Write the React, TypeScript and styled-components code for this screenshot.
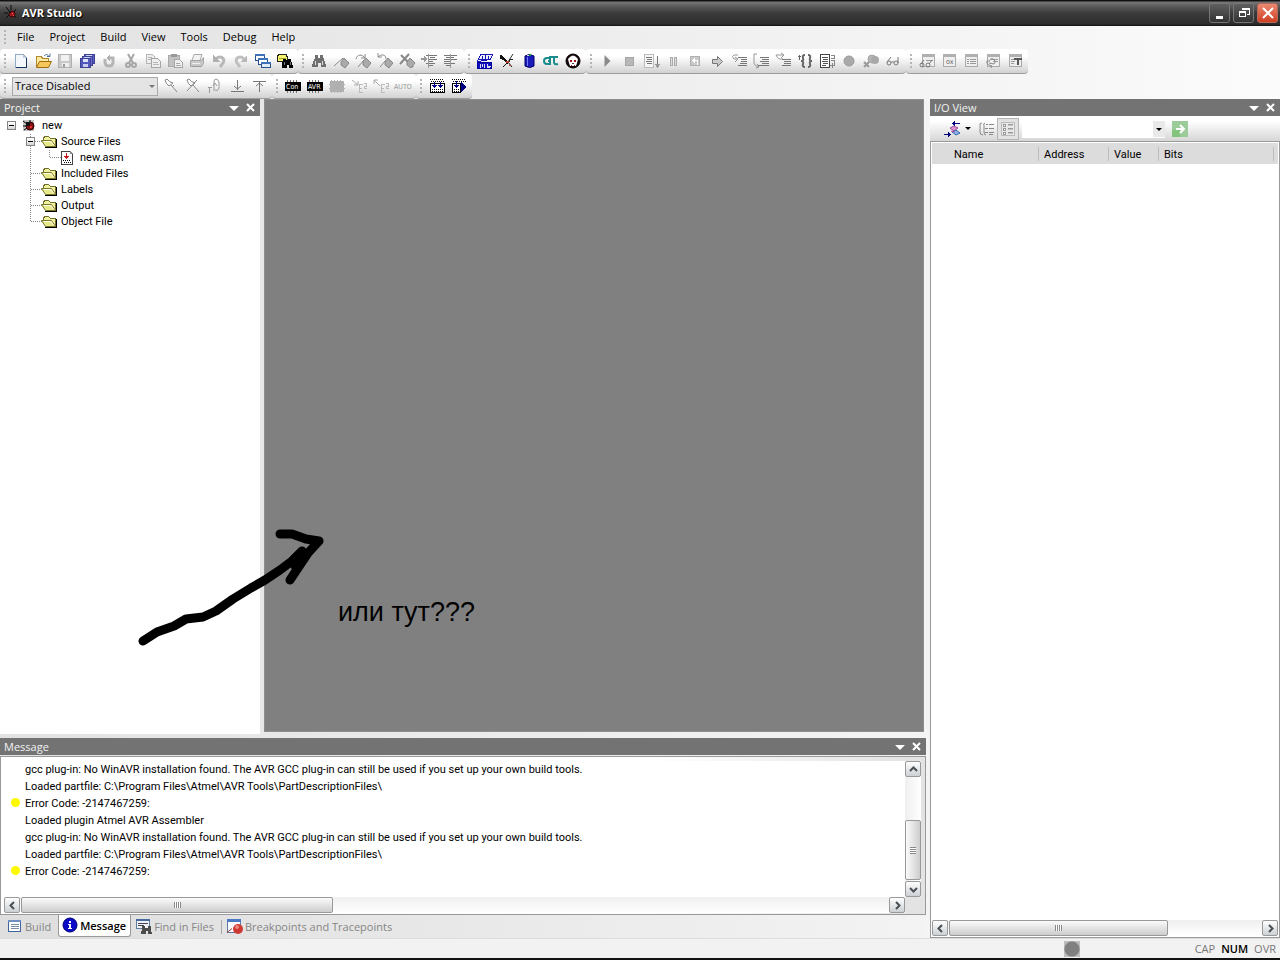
import React from 'react';
import type { ReactNode } from 'react';
import styled, { createGlobalStyle, css } from 'styled-components';

const uiFont = '"Open Sans", "Noto Sans", sans-serif';
const listFont = 'Roboto, "Liberation Sans", sans-serif';

const GlobalStyle = createGlobalStyle`
  *, *::before, *::after { box-sizing: border-box; }
  body { margin: 0; font: 11px/16px ${uiFont}; color: #000; }
  button, select { font: inherit; color: inherit; margin: 0; padding: 0; border: 0; background: none; }
  ul { list-style: none; margin: 0; padding: 0; }
  svg { display: block; flex: none; }
  h1, h2, p { margin: 0; font-size: inherit; }
`;

/* ---------- icons ---------- */

const Svg = styled.svg.attrs({ width: 16, height: 16, viewBox: '0 0 16 16', shapeRendering: 'crispEdges', 'aria-hidden': true })`
  overflow: visible;
`;
const Glyph = styled.text`
  font-family: "DejaVu Sans Condensed", "Liberation Sans", sans-serif;
  font-size: 7px;
`;

const G = '#999';
const L = '#c4c4c4';

const line = (d: string, stroke = G, strokeWidth = 1) => <path d={d} fill="none" stroke={stroke} strokeWidth={strokeWidth} />;
const smooth = (d: string, stroke = G, strokeWidth = 1) => (
  <path d={d} fill="none" stroke={stroke} strokeWidth={strokeWidth} shapeRendering="auto" />
);
const fill = (d: string, color = G) => <path d={d} fill={color} />;
const flag = <path d="M8 9l3-4 5 5-4 5-4-3z" fill="#aaa" stroke="#888" shapeRendering="auto" />;
const textLines = line('M7 4.500h9M9 6.500h7M7 8.500h9M9 10.500h7M5 12.500h11', '#777');
const win = (
  <>
    <path d="M2.500 1.500h12v12h-12z" fill="#eee" stroke="#aaa" />
    {fill('M2 1h13v3H2z', '#b0b0b0')}
  </>
);
const binoculars = (c: string) => (
  <>
    {fill('M4 2h3v3h2V2h3v3l1 1v2h1l1 6h-5v-4H7v4H1l1-6h1V6l1-1z', c)}
    {line('M4.500 8v4M11.500 8v4', '#ddd')}
  </>
);

const icons: Record<string, ReactNode> = {
  newFile: (
    <>
      <path d="M2.500 1.500h8l3 3v10h-11z" fill="#f4f8fd" stroke="#8fa9c6" />
      {fill('M10 2l3 3h-3z', '#b7cbe2')}
      {line('M13.500 5v10M3 14.500h11', '#17365f')}
    </>
  ),
  open: (
    <>
      <path d="M1.500 14V3.500h5l1 2h6v3" fill="#ffe9a0" stroke="#b08a2a" />
      <path d="M1.500 14.500l3-6h12l-3 6z" fill="#f7c859" stroke="#9b6d10" shapeRendering="auto" />
      {smooth('M9 3c2-2 4-2 5 1M12 3.500h3v-3', '#4a6c95')}
    </>
  ),
  save: (
    <>
      <path d="M1.500 1.500h13v13h-13z" fill="#c9c9c9" stroke="#b0b0b0" />
      {fill('M4 2h8v6H4z', '#f1f1f1')}
      {fill('M5 10h7v4H5z', '#eee')}
      {fill('M6 11h2v3H6z', '#999')}
    </>
  ),
  saveAll: (
    <>
      <path d="M5.500 1.500h10v9h-10z" fill="#5c60c4" stroke="#3d4192" />
      <path d="M3.500 3.500h10v9h-10z" fill="#6b70d2" stroke="#3d4192" />
      <path d="M1.500 5.500h10v9h-10z" fill="#5257bd" stroke="#3d4192" />
      {fill('M4 6h5v3H4z', '#dfe3fa')}
      {fill('M4 11h5v3H4z', '#c9cdf0')}
      {fill('M5 4h6v1H5zM7 2h6v1H7z', '#cfd3f5')}
    </>
  ),
  reload: <>{smooth('M4 6v3q0 4 4 4t4-4V5H9', '#b5b5b5', 3)}{fill('M9 2v7L5 5z', '#b0b0b0')}</>,
  cut: (
    <>
      {smooth('M5 1l5 9M11 1L6 10', '#a6a6a6', 2)}
      {smooth('M3 12a2 2 0 1 1 4 0a2 2 0 1 1-4 0M9 12a2 2 0 1 1 4 0a2 2 0 1 1-4 0', '#a6a6a6', 2)}
    </>
  ),
  copy: (
    <>
      <path d="M1.500 1.500h6l2 2v7h-8z" fill="#eee" stroke="#b5b5b5" />
      <path d="M6.500 5.500h6l3 3v6h-9z" fill="#eee" stroke="#a5a5a5" />
      {line('M3 4.500h4M3 6.500h3M8 9.500h5M8 11.500h6', '#b5b5b5')}
    </>
  ),
  paste: (
    <>
      <path d="M1.500 2.500h11v11h-11z" fill="#c2c2c2" stroke="#a8a8a8" />
      {fill('M4 1h6v3H4z', '#999')}
      <path d="M7.500 6.500h5l3 3v5h-8z" fill="#f0f0f0" stroke="#a5a5a5" />
      {line('M9 10.500h4M9 12.500h5', '#aaa')}
    </>
  ),
  print: (
    <>
      <path d="M5 1.500h8l-2 6H3z" fill="#f2f2f2" stroke="#aaa" shapeRendering="auto" />
      <path d="M1.500 7.500h11l2-3v6l-2 3h-11z" fill="#c8c8c8" stroke="#a5a5a5" shapeRendering="auto" />
      {line('M3 10.500h8', '#eee')}
      {fill('M3 13h9v1H3z', '#999')}
    </>
  ),
  undo: <>{smooth('M5 6c4-4 10-1 7 4l-3 4', '#b8b8b8', 3)}{fill('M2 2v7h7z', '#b0b0b0')}</>,
  redo: <>{smooth('M11 6c-4-4-10-1-7 4l3 4', '#c0c0c0', 3)}{fill('M14 2v7H7z', '#b8b8b8')}</>,
  cascade: (
    <>
      <path d="M.5 1.500h9v6h-9z" fill="#fff" stroke="#24508f" />
      {fill('M0 1h10v2H0z', '#3e72b8')}
      <path d="M3.500 5.500h9v6h-9z" fill="#fff" stroke="#24508f" />
      {fill('M3 5h10v2H3z', '#3e72b8')}
      <path d="M6.500 9.500h9v5h-9z" fill="#e3ecf8" stroke="#24508f" />
      {fill('M6 9h10v2H6z', '#3e72b8')}
    </>
  ),
  findInFiles: (
    <>
      <path d="M.5 2.500l2-1h7v2h1v5h-10z" fill="#f7f36b" stroke="#222" />
      {line('M2 5.500h7', '#a39d2c')}
      {fill('M6 6h3v1h2V6h3v3h1l1 6h-4v-3h-2v3H5V9h1z', '#000')}
      {line('M7.500 9v3M13.500 9v3', '#777')}
    </>
  ),
  find: binoculars('#6f6f6f'),
  bookmark: <>{smooth('M1 13L10 5', '#888')}{flag}</>,
  bookmarkNext: <>{smooth('M1 6c1-5 6-5 9-1M10 1v4H6M3 14l6-7', '#888')}{flag}</>,
  bookmarkPrev: <>{smooth('M9 6C9 1 4 1 1 4M1 0v4h4M3 14l6-7', '#888')}{flag}</>,
  bookmarkClear: <>{smooth('M2 2l12 12M10 1L1 11', '#888', 2)}{flag}</>,
  indent: <>{line('M5 2.500h11M9 4.500h5M7 6.500h9M7 8.500h5M5 10.500h9M7 12.500h5', '#777')}{fill('M0 5h3V3l3 3-3 3V7H0z')}{line('M7.500 1v14')}</>,
  outdent: <>{line('M1 2.500h13M3 4.500h8M1 6.500h13M1 8.500h6M1 10.500h11M3 12.500h5', '#777')}{line('M7.500 1v14')}</>,
  simulator: (
    <>
      <path d="M.5 9.500h14v6h-14z" fill="#1010c0" stroke="#0000a0" />
      <path d="M.5 8.500l3-7h12l-2 5z" fill="#eef" stroke="#1515b5" />
      {line('M5.500 3v4M8.500 2v4M11.500 3v4M1 6.500h13', '#1515b5')}
      {line('M3.500 11v4M5.500 11v3M7.500 11v4M10.500 11v2h3M10 14.500h3', '#dde')}
    </>
  ),
  butterfly: (
    <>
      {fill('M1 2l3 1 4 5 1 3-2-1-3-3-3-1z', '#111')}
      {smooth('M14 1L9 9', '#333')}
      {smooth('M9 9l4 5M8 10l-4 4', '#111')}
      {fill('M10 6h4v1h-3v2h-1z', '#222')}
      {fill('M7 8h3v2H7zM10 12h2v1h-2z', '#c03a2b')}
    </>
  ),
  can: (
    <>
      <path d="M4 3q4-3 9 0v10q-4 3-9 0z" fill="#1a1ab8" stroke="#00006a" shapeRendering="auto" />
      {line('M6.500 4v9', '#7a7af0')}
      {fill('M8 1h2v2H8z', '#1c8a4b')}
      {fill('M6 2h2v1H6z', '#dde')}
    </>
  ),
  ctt: <>{smooth('M6 5H4Q1 5 1 8t3 3h3V4h8M7 8H5M11 4v5q0 3 4 2', '#1a8c8c', 2)}</>,
  bug: (
    <>
      <circle cx="8" cy="8" r="7" fill="#160808" stroke="#000" shapeRendering="auto" />
      <path d="M3 6q5-7 10 0l-1 4-1 3H5l-1-3z" fill="#fff" shapeRendering="auto" />
      {fill('M5 7h2v2H5zM9 7h2v2H9zM6 12h1v1H6zM9 12h1v1H9z', '#a01414')}
      {fill('M7 10h2v1H7z', '#444')}
    </>
  ),
  run: <path d="M5.500 2v12l6-6z" fill="#8a8a8a" shapeRendering="auto" />,
  stop: <path d="M4.500 4.500h8v8h-8z" fill="#b8b8b8" stroke="#a5a5a5" />,
  showNext: <><path d="M1.500 1.500h9v13h-9z" fill="#f6f6f6" stroke="#bbb" />{line('M3 4.500h6M4 6.500h5M3 8.500h6M4 10.500h5M14.500 3v11', '#777')}{fill('M12 11h5l-2 4h-1z')}</>,
  pause: <path d="M5.500 4.500h2v8h-2zM9.500 4.500h2v8h-2z" fill="#ddd" stroke="#aaa" />,
  reset: <><path d="M3.500 3.500h9v9h-9z" fill="#c9c9c9" stroke="#b0b0b0" />{line('M6 7.500h5M10.500 7v5', '#fff')}{fill('M8 5v5L5 7.500z', '#fff')}</>,
  stepArrow: <path d="M3.500 6.500h5v-3l5 5-5 5v-3h-5z" fill="#ccc" stroke="#777" shapeRendering="auto" />,
  stepInto: <>{smooth('M7 2H3Q0 3 3 6h3M4 4l3 2-3 3', '#999')}{line('M7 4.500h9M10 6.500h6M10 8.500h6M7 12.500h9M9 10.500h7', '#777')}</>,
  stepOver: <>{smooth('M4 1H1v9q0 3 5 4M4 11l2 3-3 1', '#999')}{textLines}</>,
  stepOut: <>{smooth('M8 6Q3 7 1 2h7M6 0l3 2-3 3', '#999')}{line('M7 6.500h9M9 8.500h7M9 10.500h7M7 12.500h9', '#777')}</>,
  runCursor: <>{smooth('M8 2Q5 2 6 5t-2 3q3 0 2 3t2 3M11 2q3 0 2 3t2 3q-3 0-2 3t-2 3', '#666', 2)}{line('M1 3.500h3M2.500 2v5', '#666')}</>,
  autoStep: <><path d="M1.500 1.500h9v13h-9z" fill="#fff" stroke="#444" />{line('M3 4.500h6M4 6.500h5M3 8.500h6M4 10.500h5M3 12.500h4', '#555')}{line('M12 2.500h3v3h-3M12 7.500h3v5h-4M13.500 10v5', '#888')}</>,
  breakpoint: <circle cx="8" cy="8" r="5" fill="#a9a9a9" stroke="#999" shapeRendering="auto" />,
  clearBreakpoints: <><circle cx="9" cy="6" r="4" fill="#b5b5b5" stroke="#a5a5a5" shapeRendering="auto" /><circle cx="12" cy="7" r="4" fill="#a8a8a8" shapeRendering="auto" />{smooth('M1 9l5 5M6 9l-5 5', '#999', 2)}</>,
  glasses: <>{smooth('M2 10a2 2 0 1 0 4 0a2 2 0 1 0-4 0M9 10a2 2 0 1 0 4 0a2 2 0 1 0-4 0M2 9l4-5M13 10V4M6 9h3', '#777')}</>,
  watch: <><g transform="translate(1 0)">{win}{line('M6 7.500h7', '#999')}</g>{smooth('M1 12a2 2 0 1 0 4 0a2 2 0 1 0-4 0M7 12a2 2 0 1 0 4 0a2 2 0 1 0-4 0M2 11l3-4M10 11l3-4', '#777')}</>,
  registers: <>{win}<Glyph x="5" y="11" fill="#666">ox</Glyph></>,
  memory: <>{win}{line('M4 6.500h2M7 6.500h6M4 8.500h2M7 8.500h6M4 10.500h2M7 10.500h6', '#999')}</>,
  ioWindow: <>{win}{line('M6 6.500h7M8 8.500h5', '#999')}{smooth('M4 9a3 3 0 1 1 5 2l-5-1M3 7q-4 4 4 6l-1 2', '#888')}</>,
  disassembler: <>{win}{line('M4 6.500h3M4 8.500h4M4 10.500h3', '#999')}{line('M7 6h8M11 6v6', '#555', 2)}</>,
  pin: <>{smooth('M2 2q1 4 4 6l4-3Q6 4 4 1zM8 7l6 7M9 9l2-2', '#888')}</>,
  pinOff: <>{smooth('M2 2q1 4 4 6l4-3Q6 4 4 1zM8 7l6 7M12 2L2 13', '#888')}</>,
  traceLoop: <>{smooth('M7 13V4q0-3 2-3t3 3v6q-1 4-4 2M6 8l2-3 2 3', '#999')}{line('M1 9.500h4M2.500 9v6', '#999')}</>,
  downTo: <>{line('M2 13.500h13M8.500 2v10', '#777')}{smooth('M5 8l3.500 3L12 8', '#777')}</>,
  upTo: <>{line('M2 3.500h13M8.500 4v10', '#777')}{smooth('M5 8l3.500-3L12 8', '#777')}</>,
  chipCon: <>{fill('M0 4h16v9H0z', '#000')}{line('M2.500 2v2M5.500 2v2M8.500 2v2M11.500 2v2M2.500 13v2M5.500 13v2M8.500 13v2M11.500 13v2', '#777')}<Glyph x="1" y="11" fill="#fff">Con</Glyph></>,
  chipAvr: <>{fill('M0 4h16v9H0z', '#000')}{line('M2.500 2v2M5.500 2v2M8.500 2v2M11.500 2v2M2.500 13v2M5.500 13v2M8.500 13v2M11.500 13v2', '#777')}<Glyph x="1" y="11" fill="#fff">AVR</Glyph></>,
  chip: <>{fill('M1 3h14v11H1z', '#b0b0b0')}{line('M2.500 2v13M5.500 2v13M8.500 2v13M11.500 2v13M0 6.500h16M0 10.500h16', '#b0b0b0')}</>,
  eepromIn: <>{smooth('M1 2l6 5M7 3v4H3', '#aaa')}{line('M12 6.500h-4v8h4M8 10.500h3M13 5.500h2v3h-2v2h3', '#bbb')}</>,
  eepromOut: <>{smooth('M1 2l6 6M1 6V2h4', '#aaa')}{line('M12 6.500h-4v8h4M8 10.500h3M13 5.500h2v3h-2v2h3', '#bbb')}</>,
  auto: <Glyph x="-1" y="11" fill="#999">AUTO</Glyph>,
  build: (
    <>
      <path d="M1.500 5.500h14v9h-14z" fill="#fff" stroke="#000" />
      <path d="M1 1.500h14M2 3.500h13M3 11.500h11M3 13.500h11" stroke="#000" strokeDasharray="1 1" />
      {line('M5.500 4v4M11.500 4v4', '#000080')}
      {fill('M3 7h5L5.500 10zM9 7h5l-2.500 3z', '#000080')}
    </>
  ),
  buildRun: (
    <>
      <path d="M1.500 5.500h8v9h-8z" fill="#fff" stroke="#000" />
      <path d="M1 1.500h14M2 3.500h13M3 11.500h6M3 13.500h6" stroke="#000" strokeDasharray="1 1" />
      {line('M5.500 3v5', '#000080')}
      {fill('M3 7h5l-2.500 3zM10 4l6 5-6 5z', '#000080')}
    </>
  ),
  ladybug: (
    <>
      {smooth('M3 2l3 4M8 0v5M1 8h4M13 4l-2 3M3 13l3-3M13 13l-2-3', '#0a0a0a')}
      <circle cx="9" cy="9" r="3" fill="#a3161b" stroke="#3a0505" shapeRendering="auto" />
      {fill('M6 6h2v2H6z', '#111')}
      {fill('M9 8h1v1H9zM10 10h1v1h-1z', '#e55')}
    </>
  ),
  project: (
    <>
      {fill('M1 2h11v11H1z', '#c3c3c3')}
      {smooth('M1 3l4 3M8 2v3M1 8h3M2 12l3-2', '#000')}
      <circle cx="8" cy="8" r="4" fill="#8d0f14" stroke="#200" shapeRendering="auto" />
      {fill('M4 4h4v4H4z', '#111')}
      {fill('M8 8h2v2H8z', '#d33')}
    </>
  ),
  folder: (
    <>
      {fill('M4 14h12V5h-1v8H4z', '#000')}
      <path d="M2.500 7V4.500l1-2h4l2 2h5v8h-1" fill="#f3f0a0" stroke="#6f6f2a" />
      <path d="M.5 6.500h10l4 6h-10z" fill="#e9e88a" stroke="#77772c" shapeRendering="auto" />
      {smooth('M3 7.500h7l3 4', '#fffff0')}
    </>
  ),
  asmFile: (
    <>
      <path d="M1.500 1.500h9l2 2v11h-11z" fill="#fff" stroke="#444" />
      {fill('M10 1v3h3z', '#888')}
      {line('M6.500 3v4', '#c01818')}
      {fill('M4 6h5L6.500 9z', '#c01818')}
      <path d="M3 10.500h8M4 12.500h7" stroke="#000" strokeDasharray="1 1" />
    </>
  ),
  buildTab: <><path d="M1.500 1.500h12v11h-12z" fill="#fff" stroke="#3e65a0" />{fill('M1 1h13v2H1z', '#6f8fc0')}{line('M4 5.500h8M4 7.500h8M4 9.500h8', '#7d8ca5')}</>,
  infoTab: (
    <>
      <circle cx="8" cy="7" r="7" fill="#0a0ac8" stroke="#000070" shapeRendering="auto" />
      {fill('M7 3h2v2H7zM6 6h3v4h1v1H6v-1h1V7H6z', '#fff')}
    </>
  ),
  findTab: (
    <>
      <path d="M.5 .5h13v9h-13z" fill="#eef2f8" stroke="#5f7ba6" />
      {fill('M0 0h14v2H0z', '#47699d')}
      {line('M2 4.500h10M2 6.500h6', '#445')}
      {fill('M6 7h3v2h3V7h3v3l1 5h-4v-3h-2v3H5l1-5z', '#4c4c4c')}
    </>
  ),
  breakTab: (
    <>
      <path d="M.5 .5h13v13h-13z" fill="#f7f9fc" stroke="#5f7ba6" />
      {fill('M0 0h14v3H0z', '#4a78c2')}
      {smooth('M0 13.500l5-4', '#a33')}
      <circle cx="11" cy="10" r="5" fill="#cd3a33" shapeRendering="auto" />
      <circle cx="10" cy="8" r="2" fill="#e9877c" shapeRendering="auto" />
    </>
  ),
  ioGroup: (
    <>
      {line('M0 13.500h6M9 2.500h7', '#000080')}
      {fill('M4 11v5l3-3zM11 0v5L8 2.500z', '#000080')}
      <path d="M6 7l4-2 4 2-4 3z" fill="#e58fd0" stroke="#93529a" shapeRendering="auto" />
      <path d="M8 11l4-2 4 3-4 2z" fill="#86b4e8" stroke="#3f66aa" shapeRendering="auto" />
      {smooth('M7 10l4 1', '#b04ba5')}
    </>
  ),
  ioTree: <>{smooth('M4 2q-3 0-2 3v6q0 3 3 3M7 2Q5 2 6 5v6q0 3 2 3', '#888')}{line('M8 3.500h2M11 3.500h5M7 7.500h3M11 7.500h5M7 11.500h3M11 11.500h5M11 13.500h4', '#888')}</>,
  ioList: <><path d="M1.500 1.500h13v13h-13z" fill="#e8e8e8" stroke="#bbb" /><path d="M3.500 3.500h2v2h-2zM3.500 7.500h2v2h-2zM3.500 11.500h2v2h-2z" fill="#fff" stroke="#999" />{line('M8 4.500h5M8 8.500h5M8 12.500h5', L)}{line('M8 3.500h5M8 7.500h5M8 11.500h5', '#999')}</>,
  go: <>{fill('M0 0h16v16H0z', '#9bcb98')}{fill('M0 9h8v7H0z', '#82c47c')}{line('M4 8h7', '#fff', 2)}{smooth('M8 4l4 4-4 4', '#fff', 2)}</>,
};

const Icon = ({ name }: { name: string }) => <Svg>{icons[name]}</Svg>;

/* ---------- window frame ---------- */

const Window = styled.div`
  position: relative;
  display: flex;
  flex-direction: column;
  min-height: 100vh;
  background: linear-gradient(90deg, #e2e2e2, #fbfbfb);
  border-bottom: 2px solid #111;
`;

const TitleBar = styled.header`
  display: flex;
  align-items: center;
  gap: 3px;
  height: 26px;
  padding: 0 2px 0 3px;
  color: #fff;
  background: linear-gradient(#111 0, #111 1px, #777 2px, #5c5c5c 6px, #3c3c3c 13px, #2c2c2c 24px, #111 26px);
`;
const Title = styled.h1`
  flex: 1;
  font-weight: 700;
  text-shadow: 1px 1px 1px #000;
`;
const CaptionButton = styled.button<{ $danger?: boolean }>`
  display: grid;
  place-items: center;
  width: 21px;
  height: 20px;
  border: 1px solid #777;
  border-radius: 3px;
  background: linear-gradient(#5f5f5f, #333);
  ${(p) => p.$danger && css`border-color: #b5685a; background: linear-gradient(#ea8a72, #cf3f22);`}
`;

const Grip = styled.span`
  flex: none;
  width: 2px;
  height: 14px;
  margin: 0 4px;
  background: repeating-linear-gradient(#b5b5b5 0 2px, transparent 2px 4px);
`;

const MenuBar = styled.nav`
  display: flex;
  align-items: center;
  height: 23px;
  padding-bottom: 2px;
`;
const MenuButton = styled.button`
  height: 20px;
  padding: 0 8px 0 7px;
`;

const ToolRow = styled.div`
  display: flex;
  height: 25px;
`;
const Tools = styled.div`
  display: flex;
  align-items: center;
  height: 25px;
  padding-right: 2px;
  border-bottom: 1px solid #9c9c9c;
  border-radius: 4px;
  background: linear-gradient(#fff 30%, #d2d2d2);
`;
const ToolButton = styled.button<{ $pressed?: boolean }>`
  display: grid;
  place-items: center;
  flex: none;
  width: 22px;
  height: 22px;
  ${(p) => p.$pressed && css`border: 1px solid #b5b5b5; background: #e2e2e2;`}
`;

const Combo = styled.span`
  position: relative;
  display: flex;
`;
const ComboArrow = styled.span<{ $strong?: boolean }>`
  position: absolute;
  right: 3px;
  top: 8px;
  border: 3px solid transparent;
  border-top-color: ${(p) => (p.$strong ? '#000' : '#777')};
  border-bottom: 0;
  pointer-events: none;
`;
const TraceCombo = styled(Combo)`
  width: 146px;
  margin: 0 2px;
`;
const TraceSelect = styled.select`
  appearance: none;
  width: 100%;
  height: 19px;
  padding-left: 2px;
  border: 1px solid #aaa;
  background: #e4e4e4;
`;

/* ---------- docking layout ---------- */

const Main = styled.main`
  display: grid;
  flex: 1;
  grid-template-columns: minmax(0, 1fr) 350px;
  gap: 4px;
`;
const LeftColumn = styled.div`
  display: grid;
  grid-template-rows: minmax(0, 1fr) 200px;
  gap: 4px;
`;
const Upper = styled.div`
  display: grid;
  grid-template-columns: 260px minmax(0, 1fr);
  gap: 4px;
  padding-right: 2px;
`;
const Workspace = styled.section`
  margin-bottom: 2px;
  border: 1px solid #8e8e8e;
  background: #808080;
`;
const Panel = styled.section`
  display: flex;
  flex-direction: column;
  min-width: 0;
`;
const PanelHeader = styled.header`
  display: flex;
  align-items: center;
  flex: none;
  height: 17px;
  padding: 0 2px 0 4px;
  color: #f2f2f2;
  background: #737373;
`;
const PanelTitle = styled.h2`
  flex: 1;
  font-weight: 400;
`;
const HeaderButton = styled.button`
  display: grid;
  place-items: center;
  width: 16px;
  height: 16px;
`;

const Dock = ({ title, children }: { title: string; children: ReactNode }) => (
  <Panel aria-label={title}>
    <PanelHeader>
      <PanelTitle>{title}</PanelTitle>
      <HeaderButton aria-label={`${title} options`}>
        <svg width="10" height="6" aria-hidden="true"><path d="M0 1h10L5 6z" fill="#fff" /></svg>
      </HeaderButton>
      <HeaderButton aria-label={`Close ${title}`}>
        <svg width="9" height="9" aria-hidden="true"><path d="M1 1l7 7M8 1L1 8" stroke="#fff" strokeWidth="2" /></svg>
      </HeaderButton>
    </PanelHeader>
    {children}
  </Panel>
);

/* ---------- project tree ---------- */

const Tree = styled.ul`
  flex: 1;
  padding-top: 2px;
  background: #fff;
  font-family: ${listFont};
`;
const TreeRow = styled.li`
  position: relative;
  display: flex;
  align-items: center;
  height: 16px;
  gap: 4px;
`;
const Expander = styled.button<{ $level: number }>`
  position: absolute;
  left: ${(p) => 7 + p.$level * 19}px;
  top: 3px;
  width: 9px;
  height: 9px;
  border: 1px solid #848484;
  background: linear-gradient(#000, #000) center / 5px 1px no-repeat, linear-gradient(#fff, #d5d5d5);
`;

const branches = {
  root: '',
  node: 'M30.500 0v16M31 7.500h12',
  leaf: 'M30.500 0v16M49.500 0v8M50 7.500h12',
  last: 'M30.500 0v8M31 7.500h12',
};
const tree: { label: string; icon: string; level: number; branch: keyof typeof branches; open?: boolean }[] = [
  { label: 'new', icon: 'project', level: 0, branch: 'root', open: true },
  { label: 'Source Files', icon: 'folder', level: 1, branch: 'node', open: true },
  { label: 'new.asm', icon: 'asmFile', level: 2, branch: 'leaf' },
  { label: 'Included Files', icon: 'folder', level: 1, branch: 'node' },
  { label: 'Labels', icon: 'folder', level: 1, branch: 'node' },
  { label: 'Output', icon: 'folder', level: 1, branch: 'node' },
  { label: 'Object File', icon: 'folder', level: 1, branch: 'last' },
];
const Twig = styled.svg`
  overflow: visible;
`;

/* ---------- scroll bars ---------- */

const ScrollBar = styled.div<{ $vertical?: boolean }>`
  display: flex;
  flex: none;
  flex-direction: ${(p) => (p.$vertical ? 'column' : 'row')};
  ${(p) => (p.$vertical ? 'width: 16px;' : 'height: 16px;')}
  background: linear-gradient(${(p) => (p.$vertical ? '90deg' : '180deg')}, #efefef, #fff);
`;
const ScrollButton = styled.button`
  display: grid;
  place-items: center;
  flex: none;
  width: 16px;
  height: 16px;
  border: 1px solid #999;
  border-radius: 2px;
  background: linear-gradient(#fff, #ccd0d4);
`;
const Track = styled.div<{ $vertical?: boolean }>`
  display: flex;
  flex: 1;
  flex-direction: ${(p) => (p.$vertical ? 'column' : 'row')};
  justify-content: ${(p) => (p.$vertical ? 'flex-end' : 'flex-start')};
  padding: ${(p) => (p.$vertical ? '0 0 1px' : '0 0 0 1px')};
`;
const Thumb = styled.div<{ $vertical?: boolean; $size: string }>`
  display: grid;
  place-items: center;
  ${(p) => (p.$vertical ? 'height' : 'width')}: ${(p) => p.$size};
  border: 1px solid #999;
  border-radius: 2px;
  background: linear-gradient(${(p) => (p.$vertical ? '90deg' : '180deg')}, #fbfbfb, #cdcdcd);
`;
const ThumbGrip = styled.span<{ $vertical?: boolean }>`
  width: ${(p) => (p.$vertical ? 6 : 7)}px;
  height: ${(p) => (p.$vertical ? 7 : 6)}px;
  background: repeating-linear-gradient(${(p) => (p.$vertical ? '180deg' : '90deg')}, #888 0 1px, #fff 1px 2px);
`;

const arrows = { left: 'M6 1L2.500 4.500 6 8', right: 'M3 1l3.500 3.500L3 8', up: 'M1 6l3.500-3.500L8 6', down: 'M1 3l3.500 3.500L8 3' };
const Arrow = ({ to }: { to: keyof typeof arrows }) => (
  <ScrollButton aria-label={`Scroll ${to}`}>
    <svg width="9" height="9" aria-hidden="true"><path d={arrows[to]} fill="none" stroke="#4b4f55" strokeWidth="2" /></svg>
  </ScrollButton>
);
const Scroll = ({ vertical, size }: { vertical?: boolean; size: string }) => (
  <ScrollBar $vertical={vertical}>
    <Arrow to={vertical ? 'up' : 'left'} />
    <Track $vertical={vertical}>
      <Thumb $vertical={vertical} $size={size}><ThumbGrip $vertical={vertical} /></Thumb>
    </Track>
    <Arrow to={vertical ? 'down' : 'right'} />
  </ScrollBar>
);

/* ---------- messages ---------- */

const MessageBox = styled.div`
  display: grid;
  flex: 1;
  grid-template-columns: minmax(0, 1fr) 16px;
  grid-template-rows: minmax(0, 1fr) 16px;
  margin-top: 1px;
  padding: 4px 4px 1px 3px;
  border: 1px solid #999;
  background: linear-gradient(90deg, #fff 70%, #e3e3e3 98%);
`;
const MessageList = styled.ul`
  background: #fff;
  font-family: ${listFont};
`;
const MessageRow = styled.li<{ $warning?: boolean }>`
  display: flex;
  align-items: center;
  height: 17px;
  gap: 5px;
  padding-left: 7px;
  white-space: nowrap;
  &::before {
    content: '';
    flex: none;
    width: 9px;
    height: 9px;
    margin-bottom: 2px;
    border-radius: 50%;
    background: ${(p) => (p.$warning ? '#fdf900' : 'transparent')};
  }
`;
const messages = [
  'gcc plug-in: No WinAVR installation found. The AVR GCC plug-in can still be used if you set up your own build tools.',
  'Loaded partfile: C:\\Program Files\\Atmel\\AVR Tools\\PartDescriptionFiles\\',
  'Error Code: -2147467259:',
  'Loaded plugin Atmel AVR Assembler',
  'gcc plug-in: No WinAVR installation found. The AVR GCC plug-in can still be used if you set up your own build tools.',
  'Loaded partfile: C:\\Program Files\\Atmel\\AVR Tools\\PartDescriptionFiles\\',
  'Error Code: -2147467259:',
];
const Tabs = styled.div`
  display: flex;
  align-items: flex-start;
  height: 23px;
  padding-left: 2px;
  background: linear-gradient(90deg, #dedede, #f3f3f3);
`;
const Tab = styled.button<{ $active?: boolean }>`
  display: flex;
  align-items: center;
  gap: 2px;
  height: 23px;
  padding: 0 7px 0 5px;
  color: #858585;
  ${(p) => p.$active && css`
    height: 22px;
    padding: 0 4px 0 3px;
    border: 1px solid #999;
    border-top: 0;
    border-radius: 0 0 3px 3px;
    background: #fff;
    color: #000;
    font-weight: 600;
  `}
`;
const TabDivider = styled.span`
  width: 1px;
  height: 14px;
  margin-top: 5px;
  background: #aaa;
`;

/* ---------- I/O view ---------- */

const IoTools = styled.div`
  display: flex;
  align-items: center;
  height: 25px;
  padding-left: 11px;
  background: linear-gradient(#fff 20%, #d6d6d6);
`;
const SplitArrow = styled.span`
  margin: 0 4px 0 2px;
  border: 3px solid transparent;
  border-top-color: #000;
  border-bottom: 0;
`;
const IoCombo = styled(Combo)`
  width: 143px;
  margin: 0 4px 0 3px;
`;
const IoSelect = styled.select`
  appearance: none;
  width: 100%;
  height: 18px;
  background: linear-gradient(#e9e9e9, #e9e9e9) right center / 12px 16px no-repeat #fff;
`;
const IoBody = styled.div`
  display: flex;
  flex: 1;
  flex-direction: column;
  justify-content: space-between;
  padding: 1px 1px 1px;
  border: 1px solid #999;
  background: #fff;
`;
const IoTable = styled.table`
  width: 100%;
  border-spacing: 0;
  table-layout: fixed;
  font-family: ${listFont};
`;
const IoHead = styled.th<{ $width?: number; $first?: boolean }>`
  width: ${(p) => (p.$width ? `${p.$width}px` : 'auto')};
  height: 21px;
  padding: 2px 0 0 ${(p) => (p.$first ? 22 : 5)}px;
  background: linear-gradient(#bdbdbd, #bdbdbd) right center / 1px 14px no-repeat #dcdcdc;
  font-weight: 400;
  line-height: 18px;
  text-align: left;
  &:last-child { background-position: right 4px center; }
`;

/* ---------- status bar and pen notes ---------- */

const StatusBar = styled.footer`
  display: flex;
  align-items: center;
  height: 20px;
  padding-right: 4px;
  border-top: 1px solid #ddd;
  background: #f2f2f2;
`;
const StatusLamp = styled.span`
  width: 16px;
  height: 16px;
  margin: 0 109px 0 auto;
  background: radial-gradient(circle, #808080 7px, #bebebe 8px);
`;
const StatusKey = styled.span<{ $on?: boolean }>`
  margin-left: 6px;
  color: ${(p) => (p.$on ? '#000' : '#777')};
  font-weight: ${(p) => (p.$on ? 600 : 400)};
`;
const PenArrow = styled.svg`
  position: absolute;
  left: 130px;
  top: 520px;
  pointer-events: none;
`;
const PenNote = styled.p`
  position: absolute;
  left: 338px;
  top: 596px;
  font: 27px/32px "Liberation Sans", sans-serif;
`;

const menus = ['File', 'Project', 'Build', 'View', 'Tools', 'Debug', 'Help'];
const toolbars = [
  ['newFile', 'open', 'save', 'saveAll', 'reload', 'cut', 'copy', 'paste', 'print', 'undo', 'redo', 'cascade', 'findInFiles'],
  ['find', 'bookmark', 'bookmarkNext', 'bookmarkPrev', 'bookmarkClear', 'indent', 'outdent'],
  ['simulator', 'butterfly', 'can', 'ctt', 'bug'],
  ['run', 'stop', 'showNext', 'pause', 'reset', 'stepArrow', 'stepInto', 'stepOver', 'stepOut', 'runCursor', 'autoStep', 'breakpoint', 'clearBreakpoints', 'glasses'],
  ['watch', 'registers', 'memory', 'ioWindow', 'disassembler'],
];
const traceTools = ['pin', 'pinOff', 'traceLoop', 'downTo', 'upTo'];
const deviceTools = ['chipCon', 'chipAvr', 'chip', 'eepromIn', 'eepromOut', 'auto'];
const buildTools = ['build', 'buildRun'];

const Buttons = ({ names }: { names: string[] }) => (
  <>
    {names.map((name) => (
      <ToolButton key={name} aria-label={name}><Icon name={name} /></ToolButton>
    ))}
  </>
);

export default function App() {
  return (
    <Window>
      <GlobalStyle />
      <TitleBar>
        <Icon name="ladybug" />
        <Title>AVR Studio</Title>
        <CaptionButton aria-label="Minimize">
          <svg width="14" height="14" aria-hidden="true"><path d="M3 10h7v3H3z" fill="#fff" /></svg>
        </CaptionButton>
        <CaptionButton aria-label="Restore">
          <svg width="14" height="14" aria-hidden="true" shapeRendering="crispEdges">
            <path d="M5 4V2.500h7v6h-2M2.500 5.500h6v5h-6zM2 6.500h7M5 3.500h7" fill="none" stroke="#fff" />
          </svg>
        </CaptionButton>
        <CaptionButton $danger aria-label="Close">
          <svg width="12" height="12" aria-hidden="true"><path d="M1 1l10 10M11 1L1 11" stroke="#fff" strokeWidth="2" /></svg>
        </CaptionButton>
      </TitleBar>

      <MenuBar aria-label="Main menu">
        <Grip />
        {menus.map((m) => <MenuButton key={m}>{m}</MenuButton>)}
      </MenuBar>

      <ToolRow>
        {toolbars.map((names) => (
          <Tools key={names[0]} role="toolbar">
            <Grip />
            <Buttons names={names} />
          </Tools>
        ))}
      </ToolRow>
      <ToolRow>
        <Tools role="toolbar">
          <Grip />
          <TraceCombo>
            <TraceSelect aria-label="Trace mode" defaultValue="Trace Disabled">
              <option>Trace Disabled</option>
            </TraceSelect>
            <ComboArrow />
          </TraceCombo>
          <Buttons names={traceTools} />
        </Tools>
        <Tools role="toolbar"><Grip /><Buttons names={deviceTools} /></Tools>
        <Tools role="toolbar"><Grip /><Buttons names={buildTools} /></Tools>
      </ToolRow>

      <Main>
        <LeftColumn>
          <Upper>
            <Dock title="Project">
              <Tree>
                {tree.map((n) => (
                  <TreeRow key={n.label}>
                    <Twig width={18 + n.level * 19} height="16" aria-hidden="true" shapeRendering="crispEdges">
                      <path d={branches[n.branch]} stroke="#888" strokeDasharray="1 1" />
                    </Twig>
                    <Icon name={n.icon} />
                    {n.open && <Expander $level={n.level} aria-label={`Collapse ${n.label}`} />}
                    {n.label}
                  </TreeRow>
                ))}
              </Tree>
            </Dock>
            <Workspace aria-label="Workspace" />
          </Upper>
          <Dock title="Message">
            <MessageBox>
              <MessageList>
                {messages.map((m, i) => (
                  <MessageRow key={i} $warning={m.startsWith('Error')}>{m}</MessageRow>
                ))}
              </MessageList>
              <Scroll vertical size="60px" />
              <Scroll size="36%" />
            </MessageBox>
            <Tabs>
              <Tab><Icon name="buildTab" />Build</Tab>
              <Tab $active><Icon name="infoTab" />Message</Tab>
              <Tab><Icon name="findTab" />Find in Files</Tab>
              <TabDivider />
              <Tab><Icon name="breakTab" />Breakpoints and Tracepoints</Tab>
            </Tabs>
          </Dock>
        </LeftColumn>

        <Dock title="I/O View">
          <IoTools>
            <ToolButton aria-label="Group by"><Icon name="ioGroup" /></ToolButton>
            <SplitArrow />
            <ToolButton aria-label="Tree view"><Icon name="ioTree" /></ToolButton>
            <ToolButton $pressed aria-label="List view"><Icon name="ioList" /></ToolButton>
            <IoCombo>
              <IoSelect aria-label="Filter" />
              <ComboArrow $strong />
            </IoCombo>
            <ToolButton aria-label="Go"><Icon name="go" /></ToolButton>
          </IoTools>
          <IoBody>
            <IoTable>
              <thead>
                <tr>
                  <IoHead $width={107} $first>Name</IoHead>
                  <IoHead $width={70}>Address</IoHead>
                  <IoHead $width={50}>Value</IoHead>
                  <IoHead>Bits</IoHead>
                </tr>
              </thead>
            </IoTable>
            <Scroll size="70%" />
          </IoBody>
        </Dock>
      </Main>

      <StatusBar>
        <StatusLamp />
        <StatusKey>CAP</StatusKey>
        <StatusKey $on>NUM</StatusKey>
        <StatusKey>OVR</StatusKey>
      </StatusBar>

      <PenArrow width="210" height="140" aria-hidden="true">
        <path
          d="M13 121L27 112L44 106L56 99L73 97L86 91L103 79L121 68L135 60L150 50L162 41L172 31M150 14L162 14L176 19L189 21L178 33L170 45L160 60M165 46L174 36"
          fill="none" stroke="#000" strokeWidth="9" strokeLinecap="round" strokeLinejoin="round"
        />
      </PenArrow>
      <PenNote>или тут???</PenNote>
    </Window>
  );
}
